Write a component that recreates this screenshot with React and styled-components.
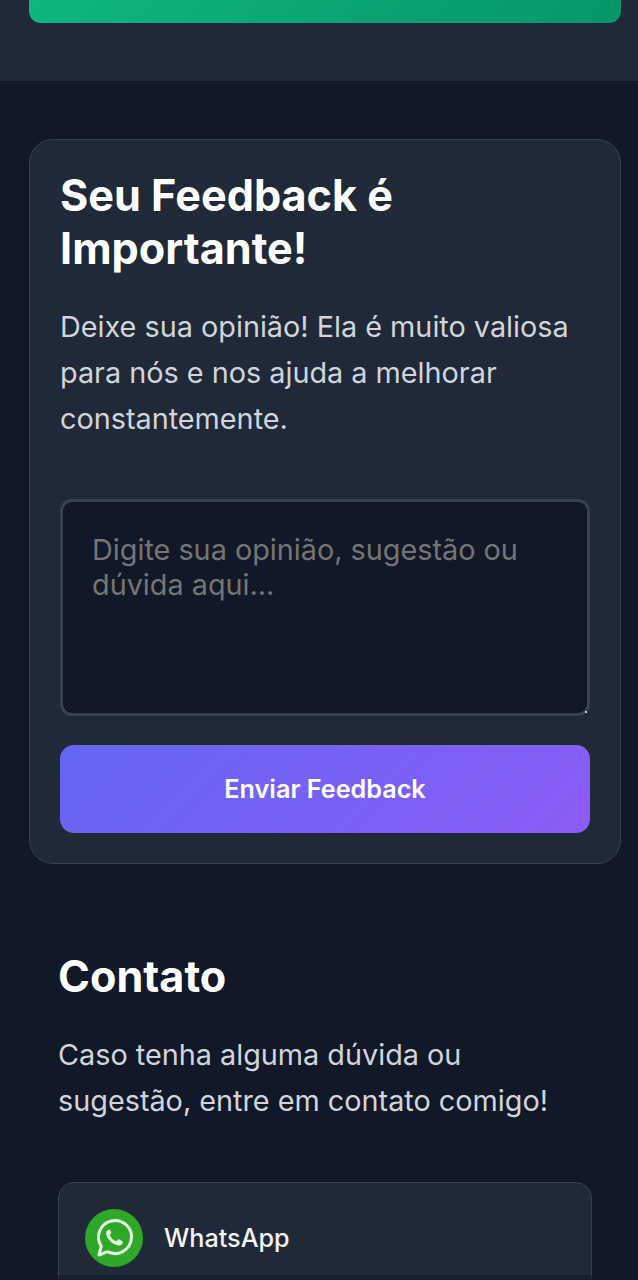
import React from "react";
import styled, { createGlobalStyle } from "styled-components";

const GlobalStyle = createGlobalStyle`
  html, body {
    margin: 0;
    padding: 0;
    height: 1280px;
    overflow: hidden;
    background: #111827;
    font-family: Inter, "Liberation Sans", sans-serif;
  }
  * { box-sizing: border-box; }
`;

const Page = styled.div`
  position: relative;
  height: 1280px;
  overflow: hidden;
  background: #111827;
`;

const TopSection = styled.section`
  margin-top: -60px;
  height: 141px;
  padding: 0 17px 0 29px;
  background: #1f2937;
`;

const GreenButton = styled.div`
  height: 83px;
  border-radius: 12px;
  background: linear-gradient(135deg, #10b981, #059669);
`;

const FeedbackCard = styled.section`
  margin: 58px 17px 0 29px;
  padding: 29px 30px 30px;
  height: 725px;
  background: #1f2937;
  border: 1px solid #374151;
  border-radius: 24px;
`;

const CardTitle = styled.h2`
  margin: 0;
  color: #fff;
  font-size: 43.2px;
  line-height: 53px;
  font-weight: 700;
`;

const CardText = styled.p`
  margin: 29px 0 0;
  color: #d1d5db;
  font-size: 28.8px;
  line-height: 46px;
`;

const InputWrap = styled.div`
  position: relative;
  height: 217px;
  margin-top: 57px;
`;

const FeedbackInput = styled.textarea`
  display: block;
  width: 100%;
  height: 100%;
  padding: 30px 29px;
  background: #111827;
  border: 3px solid #374151;
  border-radius: 12px;
  color: #fff;
  font-family: inherit;
  font-size: 28.8px;
  line-height: 35px;
  outline: none;
  resize: none;
  &::placeholder { color: #757575; opacity: 1; }
`;

const ResizeDot = styled.span`
  position: absolute;
  right: 3px;
  bottom: 3px;
  width: 2px;
  height: 2px;
  background: #c9ccd1;
`;

const SendButton = styled.button`
  display: block;
  width: 100%;
  height: 88px;
  margin-top: 29px;
  border: 0;
  border-radius: 14px;
  background: linear-gradient(135deg, #6366f1, #8b5cf6);
  color: #fff;
  font-family: inherit;
  font-size: 25.2px;
  font-weight: 600;
`;

const ContactSection = styled.section`
  padding: 82px 46px 0 58px;
`;

const ContactTitle = styled.h2`
  margin: 0;
  color: #fff;
  font-size: 43.2px;
  line-height: 60px;
  font-weight: 700;
`;

const ContactText = styled.p`
  margin: 26px 0 0;
  color: #d1d5db;
  font-size: 28.8px;
  line-height: 46px;
`;

const ContactCard = styled.div`
  display: flex;
  align-items: center;
  gap: 21px;
  height: 111px;
  margin-top: 58px;
  padding: 0 26px;
  background: #1f2937;
  border: 1px solid #374151;
  border-radius: 16px;
`;

const ContactName = styled.span`
  color: #f3f4f6;
  font-size: 25.2px;
  font-weight: 500;
`;

const BottomFade = styled.div`
  position: absolute;
  left: 0;
  right: 0;
  bottom: 0;
  height: 5px;
  background: rgba(17, 24, 39, 0.55);
`;

const WhatsAppIcon = () => (
  <svg width="58" height="58" viewBox="0 0 58 58" aria-hidden="true">
    <circle cx="29" cy="29" r="29" fill="#2fa82a" />
    <path
      d="M14 46l2.300-8.800A16.500 16.500 0 1 1 22.500 42.700z"
      fill="none"
      stroke="#e4f5e2"
      strokeWidth="3"
      strokeLinejoin="round"
    />
    <path
      d="M24.400 20.500c-.7 0-1.900.5-2.600 1.600-.9 1.400-.9 3.400.2 5.600 1.700 3.400 5.200 6.900 9.300 8.400 2.200.8 4.200.4 5.400-.7.900-.9 1.300-2.100 1.100-2.900-1.800-1.200-3.200-1.900-4.500-2.300l-2 2.100c-3-.9-5.400-3.300-6.600-6.300l1.800-1.900c-.4-1.400-1.100-2.700-2.100-3.600z"
      fill="#e4f5e2"
    />
  </svg>
);

export default function App() {
  return (
    <Page>
      <GlobalStyle />
      <TopSection>
        <GreenButton />
      </TopSection>
      <FeedbackCard>
        <CardTitle>
          Seu Feedback é
          <br />
          Importante!
        </CardTitle>
        <CardText>
          Deixe sua opinião! Ela é muito valiosa para nós e nos ajuda a melhorar constantemente.
        </CardText>
        <InputWrap>
          <FeedbackInput placeholder="Digite sua opinião, sugestão ou dúvida aqui..." />
          <ResizeDot />
        </InputWrap>
        <SendButton>Enviar Feedback</SendButton>
      </FeedbackCard>
      <ContactSection>
        <ContactTitle>Contato</ContactTitle>
        <ContactText>Caso tenha alguma dúvida ou sugestão, entre em contato comigo!</ContactText>
        <ContactCard>
          <WhatsAppIcon />
          <ContactName>WhatsApp</ContactName>
        </ContactCard>
      </ContactSection>
      <BottomFade />
    </Page>
  );
}
